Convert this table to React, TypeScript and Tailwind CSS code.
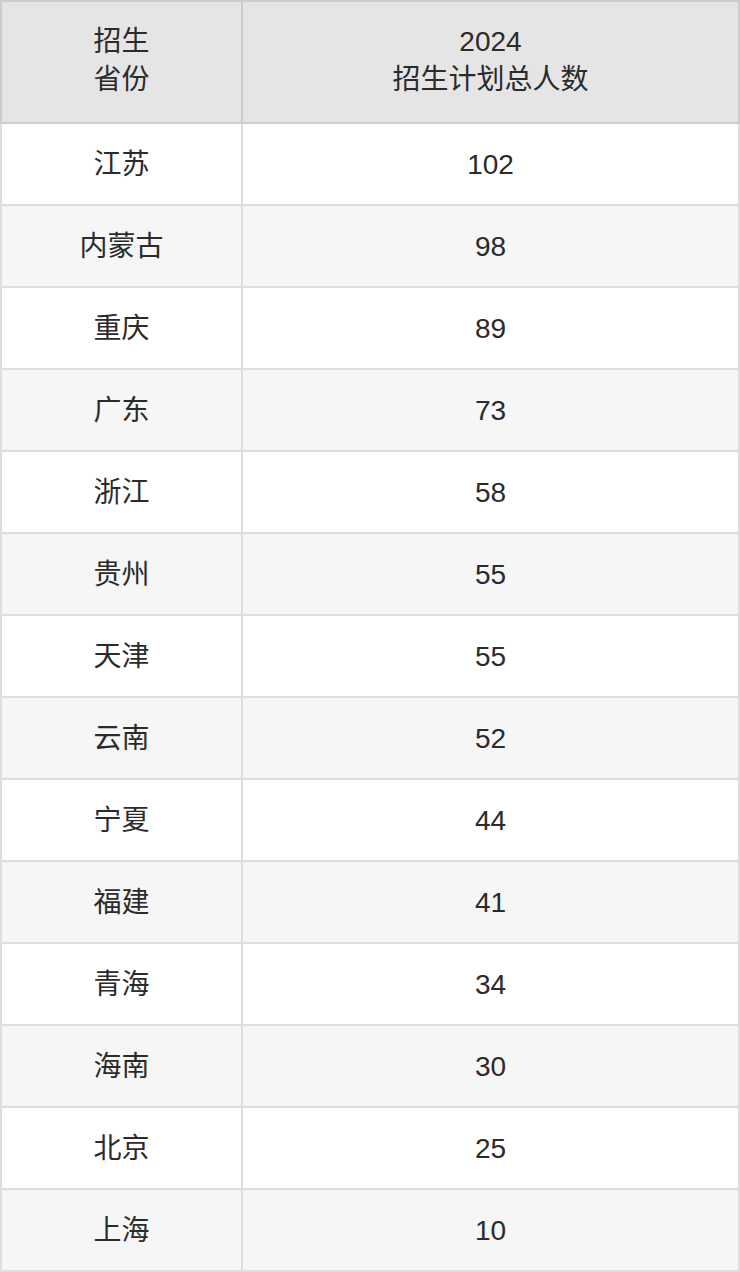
const rows: [string, number][] = [
  ["江苏", 102],
  ["内蒙古", 98],
  ["重庆", 89],
  ["广东", 73],
  ["浙江", 58],
  ["贵州", 55],
  ["天津", 55],
  ["云南", 52],
  ["宁夏", 44],
  ["福建", 41],
  ["青海", 34],
  ["海南", 30],
  ["北京", 25],
  ["上海", 10],
];

const font = {
  fontFamily: '"Liberation Sans", Arial, "Noto Sans CJK SC", sans-serif',
};

export default function App() {
  return (
    <div className="w-[740px] bg-white text-[28px] leading-[38px] text-[#2b2b2b]" style={font}>
      <div className="flex h-[124px] border-2 border-[#cccccc] bg-[#e5e5e5]">
        <div className="flex w-[241px] items-center justify-center border-r-2 border-[#cccccc] pb-[2px] text-center">
          招生
          <br />
          省份
        </div>
        <div className="flex flex-1 items-center justify-center pb-[2px] text-center">
          2024
          <br />
          招生计划总人数
        </div>
      </div>
      {rows.map(([name, count], i) => (
        <div
          key={name}
          className={
            "flex h-[82px] border-x-2 border-b-2 border-[#dddddd] " +
            (i % 2 === 1 ? "bg-[#f6f6f6]" : "bg-white")
          }
        >
          <div className="flex w-[241px] items-center justify-center border-r-2 border-[#dddddd] pt-[1px]">
            {name}
          </div>
          <div className="flex flex-1 items-center justify-center pt-[1px]">{count}</div>
        </div>
      ))}
    </div>
  );
}
